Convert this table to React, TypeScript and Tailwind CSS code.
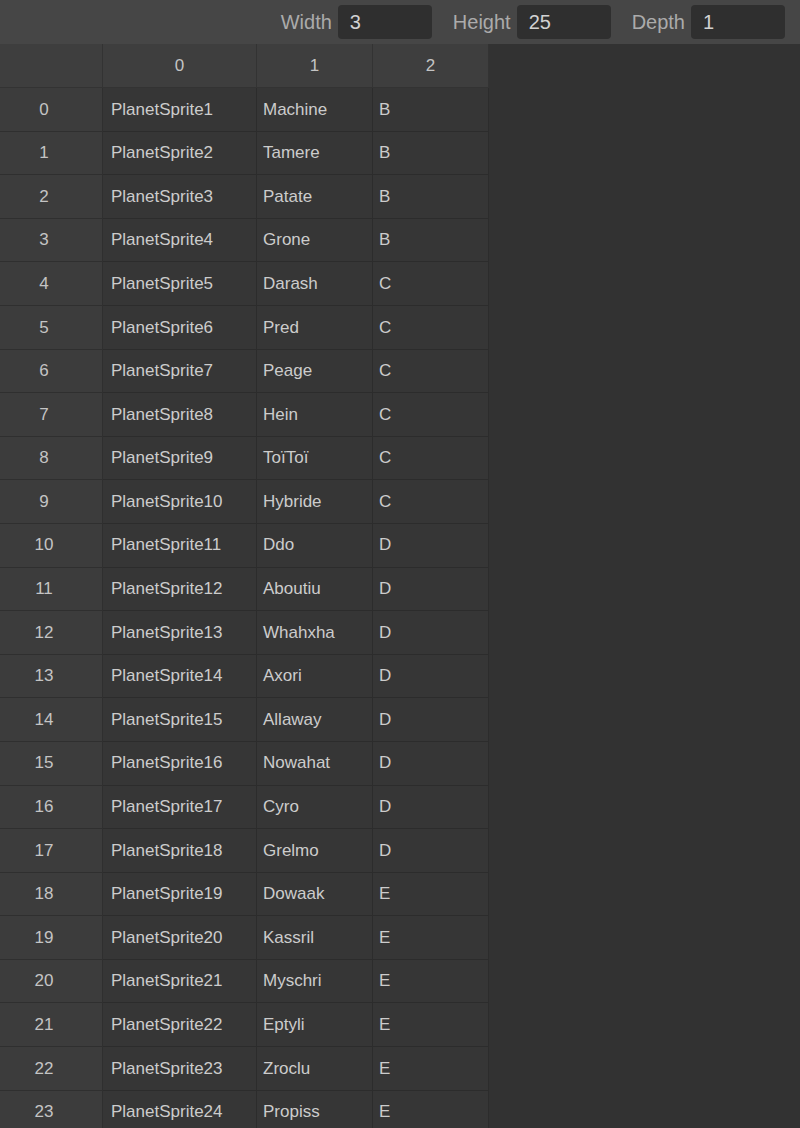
const rows: [string, string, string][] = [
  ["PlanetSprite1", "Machine", "B"],
  ["PlanetSprite2", "Tamere", "B"],
  ["PlanetSprite3", "Patate", "B"],
  ["PlanetSprite4", "Grone", "B"],
  ["PlanetSprite5", "Darash", "C"],
  ["PlanetSprite6", "Pred", "C"],
  ["PlanetSprite7", "Peage", "C"],
  ["PlanetSprite8", "Hein", "C"],
  ["PlanetSprite9", "ToïToï", "C"],
  ["PlanetSprite10", "Hybride", "C"],
  ["PlanetSprite11", "Ddo", "D"],
  ["PlanetSprite12", "Aboutiu", "D"],
  ["PlanetSprite13", "Whahxha", "D"],
  ["PlanetSprite14", "Axori", "D"],
  ["PlanetSprite15", "Allaway", "D"],
  ["PlanetSprite16", "Nowahat", "D"],
  ["PlanetSprite17", "Cyro", "D"],
  ["PlanetSprite18", "Grelmo", "D"],
  ["PlanetSprite19", "Dowaak", "E"],
  ["PlanetSprite20", "Kassril", "E"],
  ["PlanetSprite21", "Myschri", "E"],
  ["PlanetSprite22", "Eptyli", "E"],
  ["PlanetSprite23", "Zroclu", "E"],
  ["PlanetSprite24", "Propiss", "E"],
];

const SizeField = ({ label, value }: { label: string; value: string }) => (
  <div className="flex items-center gap-[6px]">
    <span className="text-[#ababab]">{label}</span>
    <div className="w-[94px] h-[34px] rounded-[4px] bg-[#2f2f2f] pl-3 flex items-center text-[#d2d2d2]">
      {value}
    </div>
  </div>
);

export default function App() {
  return (
    <div
      className="w-[800px] h-[1128px] overflow-hidden bg-[#323232] flex flex-col"
      style={{ fontFamily: '"Liberation Sans", Arial, sans-serif' }}
    >
      <div className="h-[44px] shrink-0 bg-[#464646] flex items-center justify-end gap-[21px] pr-[15px] text-[20px]">
        <SizeField label="Width" value="3" />
        <SizeField label="Height" value="25" />
        <SizeField label="Depth" value="1" />
      </div>

      <div className="grid grid-cols-[103px_154px_116px_116px] w-[489px] text-[17px]">
        {/* header row */}
        <div className="h-[44px] bg-[#3e3e3e] border-r border-b border-[#333333]" />
        {["0", "1", "2"].map((h) => (
          <div
            key={h}
            className="h-[44px] bg-[#3e3e3e] border-r border-b border-[#333333] flex items-center justify-center text-[#c4c4c4]"
          >
            {h}
          </div>
        ))}

        {rows.map((r, i) => (
          <div key={i} className="contents">
            <div className="h-[43.6px] bg-[#3c3c3c] border-r border-b border-[#2f2f2f] flex items-center justify-center pr-[14px] text-[#c4c4c4]">
              {i}
            </div>
            {r.map((c, j) => (
              <div
                key={j}
                className={
                  j === 0
                    ? "h-[43.6px] bg-[#363636] border-r border-b border-[#2c2c2c] flex items-center pl-2 text-[#cccccc]"
                    : "h-[43.6px] bg-[#363636] border-r border-b border-[#2c2c2c] flex items-center pl-[6px] text-[#cccccc]"
                }
              >
                {c}
              </div>
            ))}
          </div>
        ))}
      </div>
    </div>
  );
}
